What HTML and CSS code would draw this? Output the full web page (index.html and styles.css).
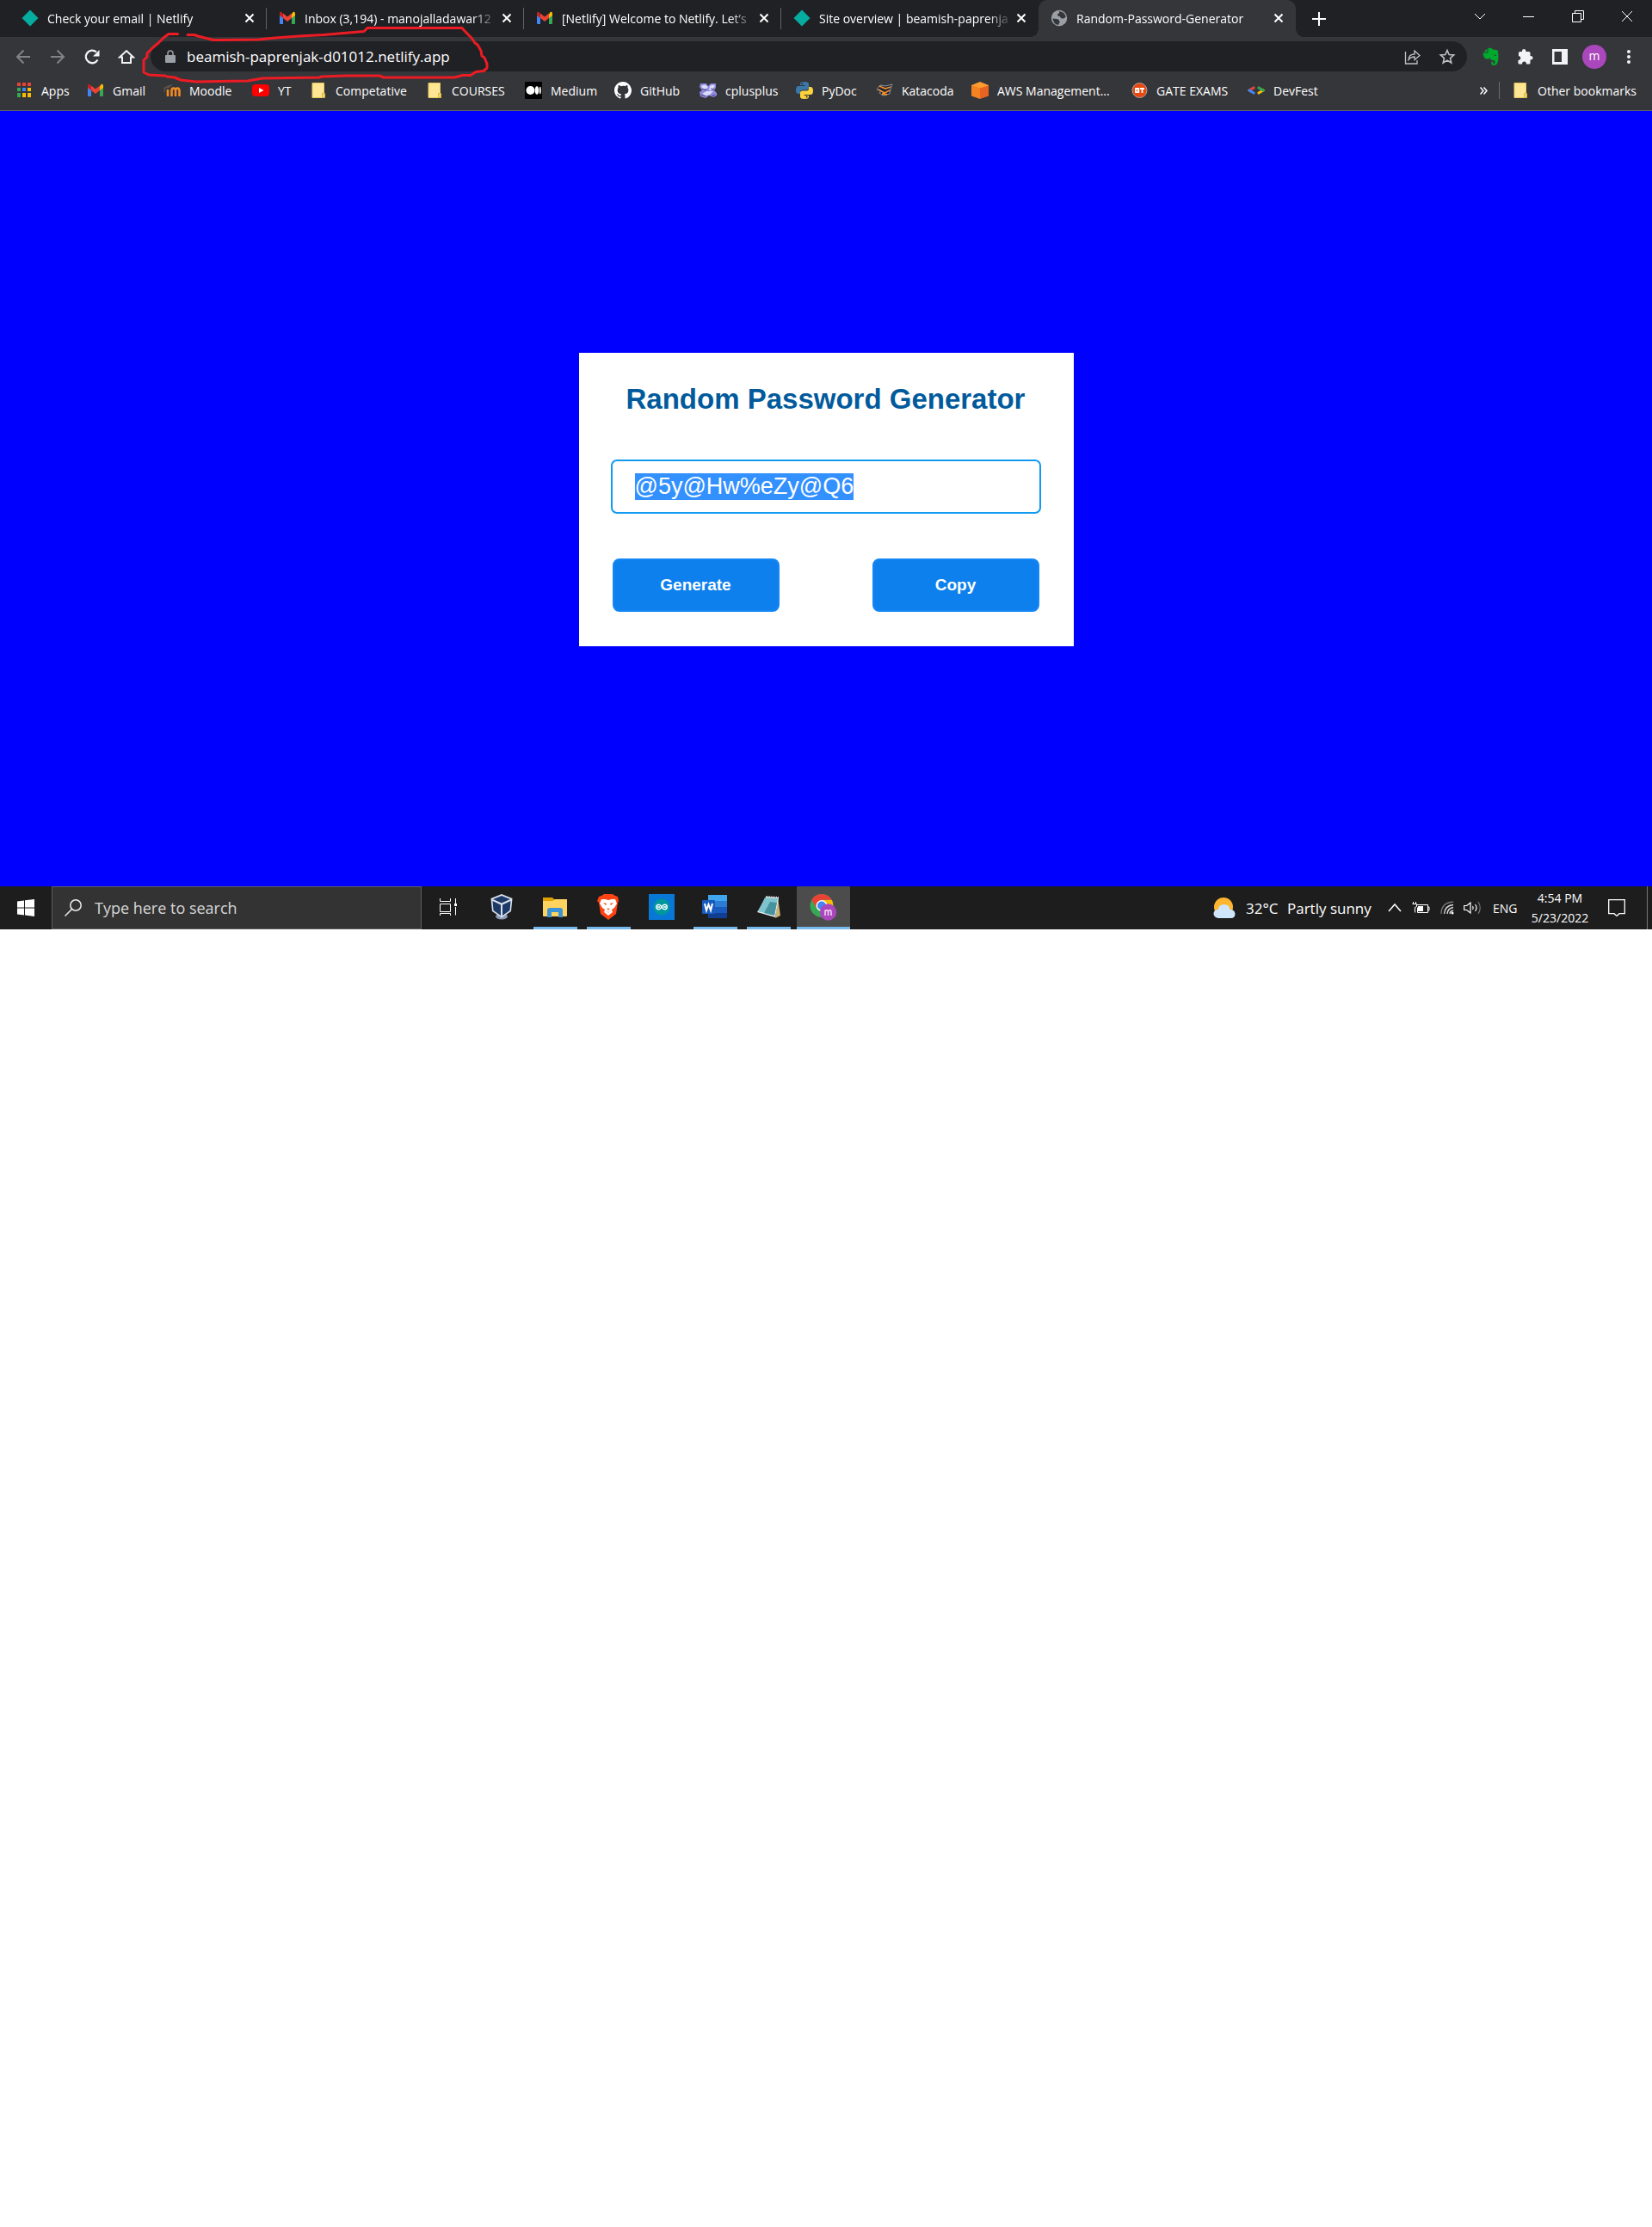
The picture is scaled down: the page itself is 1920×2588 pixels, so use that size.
FILE: index.html
```html
<!DOCTYPE html>
<html lang="en">
<head>
<meta charset="utf-8">
<title>Random-Password-Generator</title>
<link rel="stylesheet" href="styles.css">
</head>
<body>
<svg width="0" height="0" class="defs" aria-hidden="true">
  <symbol id="netlify" viewBox="0 0 20 20"><path fill="#05ada0" d="M10 .5 19.500 10 10 19.500 .5 10z"/></symbol>
  <symbol id="gmail" viewBox="0 0 20 20"><path fill="#4285f4" d="M1 5v11q0 1 1 1h3V8z"/><path fill="#34a853" d="M19 5v11q0 1-1 1h-3V8z"/><path fill="#fbbc04" d="M15 5.500V10l4-3V5q0-3-2.500-2z"/><path fill="#c5221f" d="M5 5.500V10L1 7V5q0-3 2.500-2z"/><path fill="#ea4335" d="m5 4.500 5 4 5-4V10l-5 4-5-4z"/></symbol>
  <symbol id="folder" viewBox="0 0 20 20"><path fill="#ffe694" stroke="#e8c85c" d="M3 1.500h13.500v17H3z"/><path fill="#f5d565" stroke="#d9b845" d="M14.500 13.500h3v5h-3z"/></symbol>
  <symbol id="x" viewBox="0 0 12 12"><path fill="none" stroke="#fff" stroke-width="2" d="m1.500 1.500 9 9m0-9-9 9"/></symbol>
</svg>

<header class="browser">
  <nav class="tabs" aria-label="Tabs">
    <div class="tab"><svg class="fav"><use href="#netlify"/></svg><span class="tab-title">Check your email | Netlify</span><button class="tab-close" aria-label="Close tab"><svg width="12" height="12"><use href="#x"/></svg></button></div>
    <div class="tab"><svg class="fav"><use href="#gmail"/></svg><span class="tab-title">Inbox (3,194) - manojalladawar12</span><button class="tab-close" aria-label="Close tab"><svg width="12" height="12"><use href="#x"/></svg></button></div>
    <div class="tab"><svg class="fav"><use href="#gmail"/></svg><span class="tab-title">[Netlify] Welcome to Netlify. Let’s</span><button class="tab-close" aria-label="Close tab"><svg width="12" height="12"><use href="#x"/></svg></button></div>
    <div class="tab last"><svg class="fav"><use href="#netlify"/></svg><span class="tab-title">Site overview | beamish-paprenja</span><button class="tab-close" aria-label="Close tab"><svg width="12" height="12"><use href="#x"/></svg></button></div>
    <div class="tab active"><svg class="fav" viewBox="0 0 20 20"><circle cx="10" cy="10" r="9.200" fill="#9aa0a6"/><path fill="#35363a" d="M2.500 10.500 7 11q3 0 3 2.500 1.500.5 0 2.500l-1 2Q3 17 2.500 10.500zM10 2.200q6 0 7.700 6.300-1.500 2.500-3.700 2-3-.5-3-2.500-3 0-3-2 0-1.500 2-1.500z"/></svg><span class="tab-title">Random-Password-Generator</span><button class="tab-close" aria-label="Close tab"><svg width="12" height="12"><use href="#x"/></svg></button></div>
    <button class="new-tab" aria-label="New tab"><svg width="16" height="16"><path stroke="#fff" stroke-width="2" d="M8 0v16M0 8h16"/></svg></button>
    <div class="window-controls">
      <button aria-label="Search tabs"><svg width="14" height="14"><path d="m1 4 6 6 6-6"/></svg></button>
      <button aria-label="Minimize"><svg width="14" height="14"><path d="M0 7.500h13"/></svg></button>
      <button aria-label="Restore"><svg width="14" height="14"><path d="M.5 3.500h10v10H.5zM3.500 3V.5h10v10H11"/></svg></button>
      <button aria-label="Close"><svg width="14" height="14"><path d="m1 1 12 12M13 1 1 13"/></svg></button>
    </div>
  </nav>

  <div class="toolbar">
    <button class="tool" aria-label="Back"><svg width="20" height="20" fill="none" stroke="#828387" stroke-width="2"><path d="M18 10H3m7.500-7.500L3 10l7.500 7.500"/></svg></button>
    <button class="tool" aria-label="Forward"><svg width="20" height="20" fill="none" stroke="#828387" stroke-width="2"><path d="M2 10h15M9.500 2.500 17 10l-7.500 7.500"/></svg></button>
    <button class="tool" aria-label="Reload"><svg width="20" height="20"><path fill="none" stroke="#f1f3f4" stroke-width="2.300" d="M16.500 13.500A7.300 7.300 0 1 1 15 4.500"/><path fill="#f1f3f4" d="M18.500 2v7.500H11z"/></svg></button>
    <button class="tool" aria-label="Home"><svg width="20" height="20"><path fill="none" stroke="#f1f3f4" stroke-width="2" d="M2 10.500h3V17h10v-6.500h3L10 3z"/></svg></button>
    <div class="omnibox">
      <svg width="12" height="16"><path fill="#9aa0a6" d="M1 6h10q1 0 1 1v7q0 1-1 1H1q-1 0-1-1V7q0-1 1-1z"/><path fill="none" stroke="#9aa0a6" stroke-width="1.500" d="M3 7V4q0-3 3-3t3 3v3"/></svg>
      <input type="text" class="address" aria-label="Address" value="beamish-paprenjak-d01012.netlify.app">
      <button class="tool" aria-label="Share"><svg width="20" height="20" fill="none" stroke="#bdc1c6" stroke-width="1.300"><path d="M1.500 4v14H15v-4M5 13.500q0-6.500 7-6.500V3l6 5.500-6 5V10q-4.500 0-7 3.500z"/></svg></button>
      <button class="tool" aria-label="Bookmark"><svg width="20" height="20"><path fill="none" stroke="#bdc1c6" stroke-width="1.600" d="m10 2.500 2.200 5 5.500.5-4.200 3.600 1.300 5.400-4.800-2.900L5.200 17l1.300-5.400L2.300 8l5.500-.5z"/></svg></button>
    </div>
    <button class="tool" aria-label="Evernote"><svg width="20" height="22"><path fill="#00a82d" d="M6.500 1v4.500q0 1-1 1H1Q.3 7 1.300 10.500q.7 2.500 3.500 3h2.700l.7-2q.7 3.300 3 3.300 2.800 0 3.300 1.500.5 2.700-1.500 2.500-1.500-.3-1-1.800 1-.5 1.200-.5-2.700-1-3 1.500-.3 3 3.200 3 5 0 5-9 0-8-1-8.500-.5-.8-5.400-1-1-2-4-1.700zM5.500 1.500 1.500 5.500h4zM14 8.500q1.800-.5 2 1.500-1-.5-2.200-.2z"/></svg></button>
    <button class="tool" aria-label="Extensions"><svg width="20" height="20"><path fill="#f1f3f4" d="M2 5.500q0-1.500 1.500-1.500H6q-.3-3 2.200-3t2.300 3H14q1.500 0 1.500 1.500V9q3 0 3 2.200t-3 2.300v3.500q0 1.500-1.500 1.500h-3q0-3-2.500-3T6 18.500H3Q1.500 18.500 1.500 17v-3q2.800 0 2.800-2.400T2 9z"/></svg></button>
    <button class="tool" aria-label="Side panel"><svg width="18" height="18"><path fill="#f1f3f4" fill-rule="evenodd" d="M0 0h18v18H0zM2.500 3v12h8.500V3z"/></svg></button>
    <button class="tool" aria-label="Profile"><span class="avatar">m</span></button>
    <button class="tool" aria-label="Menu"><svg width="6" height="18" fill="#f1f3f4"><circle cx="3" cy="3" r="2"/><circle cx="3" cy="9" r="2"/><circle cx="3" cy="15" r="2"/></svg></button>
  </div>

  <nav class="bookmarks" aria-label="Bookmarks">
    <a href="#"><svg viewBox="0 0 20 20"><path fill="#ea4335" d="M2 1h4v4H2zm6 0h4v4H8zm6 0h4v4h-4z"/><path fill="#34a853" d="M2 7h4v4H2zm0 6h4v5H2z"/><path fill="#4285f4" d="M8 7h4v4H8z"/><path fill="#fbbc04" d="M14 7h4v4h-4zm-6 6h4v5H8zm6 0h4v5h-4z"/></svg>Apps</a>
    <a href="#"><svg><use href="#gmail"/></svg>Gmail</a>
    <a href="#"><svg viewBox="0 0 20 20"><path fill="none" stroke="#f08a24" stroke-width="2.600" d="M5 17V9m4.500 8v-6.500q0-3 2.200-3t2.300 3V17m0-6.500q0-3 2.200-3t2.300 3V17"/><path fill="#5b5148" d="m0 7 6-3 5-1-4 4-5 1v4H1z"/></svg>Moodle</a>
    <a href="#"><svg viewBox="0 0 20 20"><rect y="3" width="20" height="14" rx="4" fill="#f00"/><path fill="#fff" d="m8 7 5.500 3L8 13z"/></svg>YT</a>
    <a href="#"><svg><use href="#folder"/></svg>Competative</a>
    <a href="#"><svg><use href="#folder"/></svg>COURSES</a>
    <a href="#"><svg viewBox="0 0 20 20"><rect width="20" height="20" rx="1"/><g fill="#fff"><circle cx="6.500" cy="10" r="5"/><ellipse cx="14" cy="10" rx="2.200" ry="4.800"/><ellipse cx="17.800" cy="10" rx="1" ry="4.300"/></g></svg>Medium</a>
    <a href="#"><svg viewBox="0 0 16 16"><path fill="#fff" d="M8 0C3.580 0 0 3.580 0 8c0 3.540 2.290 6.530 5.470 7.590.4.070.55-.17.55-.38 0-.19-.01-.82-.01-1.490-2.010.37-2.530-.49-2.690-.94-.09-.23-.48-.94-.82-1.130-.28-.15-.68-.52-.01-.53.63-.01 1.080.58 1.230.82.72 1.210 1.870.87 2.330.66.07-.52.28-.87.51-1.070-1.780-.2-3.640-.89-3.640-3.950 0-.87.31-1.590.82-2.150-.08-.2-.36-1.020.08-2.120 0 0 .67-.21 2.200.82A7.700 7.700 0 0 1 8 3.860c.68 0 1.360.09 2 .27 1.530-1.040 2.200-.82 2.200-.82.44 1.100.16 1.920.08 2.120.51.56.82 1.270.82 2.150 0 3.070-1.870 3.750-3.650 3.950.29.25.54.73.54 1.480 0 1.070-.01 1.930-.01 2.200 0 .21.15.46.55.38A8 8 0 0 0 8 0z"/></svg>GitHub</a>
    <a href="#"><svg viewBox="0 0 20 20"><path fill="#8f8ae0" d="M1 2h7l2 3 3-3h6v5l-2 3 3 3v3l-4 2-5-2-4 3-6-2-1-5 3-2-3-4z"/><path fill="#dcdcf8" d="M2 5q5-4 8 2l-3 1-3 1zM12 5q4-3 6 0l-4 5h-3zM3 14l5-3 8 0-4 4-5 1z"/><path stroke="#484275" d="m3 8 5 2m5-2 4 1M2 15l5 2m7 0 4-2"/></svg>cplusplus</a>
    <a href="#"><svg viewBox="0 0 20 20"><path fill="#3b77a8" d="M10 0q5 0 5 2.500V7q0 2.500-2.500 2.500h-5Q5 9.500 5 12v2H3q-3 0-3-4.500Q0 5 3 5h7.500V4H5V2.500Q5 0 10 0z"/><path fill="#ffd43b" d="M10 20q-5 0-5-2.500V13q0-2.500 2.500-2.500h5Q15 10.500 15 8V6h2q3 0 3 4.500 0 4.500-3 4.500H9.500v1H15v1.500Q15 20 10 20z"/><circle cx="7.300" cy="2.400" r="1" fill="#35363a"/><circle cx="12.700" cy="17.600" r="1" fill="#35363a"/></svg>PyDoc</a>
    <a href="#"><svg viewBox="0 0 20 20"><path fill="#1d2530" stroke="#8796a5" d="m1 9 4-5 6 1 8-2-2 5-1 6-8 2-4-3 3-2z"/><path stroke="#f28c28" stroke-width="1.800" fill="none" d="m4 5 7 3 6-2M3 9l7 4 6-3M7 14l6 1"/></svg>Katacoda</a>
    <a href="#"><svg viewBox="0 0 20 20"><path fill="#ff9a2e" d="m10 0 10 4v1L10 8 0 5V4z"/><path fill="#f58220" d="m0 4.500 10 3V20L0 16.500z"/><path fill="#e96420" d="m20 4.500-10 3V20l10-3.500z"/></svg>AWS Management...</a>
    <a href="#"><svg viewBox="0 0 20 20"><circle cx="10.500" cy="10" r="8.500" fill="#e8470f" stroke="#a9a29f"/><path fill="none" stroke="#fff" stroke-width="1.800" d="M10 8H6v4.200h3.300V10H8M10.800 8H16m-2.500 0v5"/></svg>GATE EXAMS</a>
    <a href="#"><svg viewBox="0 0 20 20" stroke-width="3.200" stroke-linecap="round"><path stroke="#ea4335" d="m2 10 5-3"/><path stroke="#4285f4" d="m2 10 5 3"/><path stroke="#fbbc04" d="m13 13 5-3"/><path stroke="#34a853" d="m13 7 5 3"/></svg>DevFest</a>
    <div class="more"><button aria-label="More bookmarks"><svg width="9" height="9"><path fill="none" stroke="#fff" stroke-width="1.500" d="M.5.5 4 4.500l-3.500 4m4-8L8 4.500l-3.500 4"/></svg></button></div>
    <a href="#" class="other"><svg><use href="#folder"/></svg>Other bookmarks</a>
  </nav>
  <svg class="scribble" width="410" height="72" viewBox="160 26 410 72" fill="none" stroke="#ed1c24" stroke-width="3" stroke-linecap="round" stroke-linejoin="round" aria-hidden="true"><path d="M206.500 39.500H196l-6 4.500-6 6-6 5-7 7v4l-4 4v14l6 3 19 1 2 1 9 1 7 3 18 2 60-1 17-3 66-1 3-1 28-1h39l5 2h82l10-2.500h9l6-4 9-1 4-3.500V74l-3-7-3-2-1-6-4-7-3-2-4-6-8-8-3-3.500H427l-4 4-47 4-29 1.500-27 2-20 2-52 .5-18-4.500-4-1.500h-8"/></svg>
</header>

<main class="stage">
  <section class="card">
    <h1>Random Password Generator</h1>
    <input type="text" id="password" class="password" aria-label="Password" value="@5y@Hw%eZy@Q6" readonly>
    <div class="actions">
      <button class="action">Generate</button>
      <button class="action">Copy</button>
    </div>
  </section>
</main>

<footer class="taskbar">
  <button class="start" aria-label="Start"><svg width="20" height="20" fill="#fff"><path d="m0 2.500 8-1V9.500H0zM9 1.300 20 0v9.500H9zM0 10.500h8v8l-8-1zM9 10.500h11V20L9 18.600z"/></svg></button>
  <label class="search"><svg width="20" height="20" fill="none" stroke="#eee" stroke-width="1.500"><circle cx="13" cy="7" r="6.200"/><path d="m8.500 11.500-8 8"/></svg><input type="text" placeholder="Type here to search" aria-label="Search"></label>
  <div class="apps">
    <button class="app" aria-label="Task view"><svg width="20" height="20" fill="none" stroke="#fff"><path d="M.5 0v3.500h12V0M.5 6.500h12v9H.5zM.5 20v-2.500h12V20M18.500 0v6m0 4v9.500"/><path fill="#fff" stroke="none" d="M17 6h3v3h-3z"/></svg></button>
    <button class="app" aria-label="VirtualBox"><svg width="26" height="30" viewBox="2 0 26 30"><ellipse cx="15" cy="26" rx="7" ry="3.500" fill="#8c9bb8"/><path fill="#d7dfeb" d="m15 0 12.500 5-1.500 15-11 7.500L4 20 2.500 5z"/><path fill="#1d3a66" d="m15 2 10 4-10 4.500L5 6zM4.500 8 14 12.500V25L5.500 19zM25.500 8 16 12.500V25l8.500-6z"/></svg></button>
    <button class="app running" aria-label="File Explorer"><svg width="28" height="24"><path fill="#e0a000" d="M0 1h11l3 3v6H0z"/><path fill="#ffd45e" d="M0 5h11l3-2h14v19q0 1-1 1H1q-1 0-1-1z"/><path fill="#3e93d6" d="M5 24V16q0-3 3-3h12q3 0 3 3v8h-5v-6h-8v6z"/></svg></button>
    <button class="app running" aria-label="Brave"><svg width="26" height="30"><path fill="#ff4312" d="M8 0h10l3 2 3 1 1 5-1 2-2 13-9 7-9-7L2 10 0 8l2-5 3-1z"/><path fill="#fff" d="M5 6h4l4 1 4-1h4l2 5-3 5-3 2 1 3-5 4-5-4 1-3-3-2-3-5z"/><path fill="#ff4312" d="m7 10 4 1-1 2zM19 10l-4 1 1 2zM11 16l2 1 2-1-2 3zM10 20l3 1 3-1-3 1.500z"/></svg></button>
    <button class="app" aria-label="Arduino"><svg width="30" height="30"><path fill="#0878d7" d="M0 0h30v30H0z"/><circle cx="15" cy="15" r="9.500" fill="#00979d"/><path fill="none" stroke="#fff" stroke-width="1.500" d="M15 15q-1.500-2.700-3.500-2.700a2.700 2.700 0 0 0 0 5.400q2 0 3.500-2.700t3.500-2.700a2.700 2.700 0 0 1 0 5.400q-2 0-3.500-2.700zM10 15h3m4 0h3"/></svg></button>
    <button class="app running" aria-label="Word"><svg width="30" height="28"><path fill="#41a5ee" d="M7 0h22v7H7z"/><path fill="#2b7cd3" d="M7 7h22v7H7z"/><path fill="#185abd" d="M7 14h22v7H7z"/><path fill="#103f91" d="M7 21h22v6H7z"/><rect y="6" width="15" height="16" rx="1" fill="#185abd"/><path fill="none" stroke="#fff" stroke-width="2" d="m3 10 2 8 2.500-7 2.500 7 2-8"/></svg></button>
    <button class="app running" aria-label="Notepad"><svg width="28" height="28"><path fill="#c9b375" d="m25 3 3 21-6 3z"/><path fill="#e9eeee" d="m12 2 14 1-4 23-21-6z"/><path fill="#7fc3cf" d="m10 3 15 1-4 20L2 19z"/><path fill="#2d7f8c" d="M16 8 9 21l12 3 3-15z" opacity=".7"/><path stroke="#ddd" stroke-width="2" stroke-dasharray="1 1" d="m11 2 15 1"/></svg></button>
    <button class="app current" aria-label="Chrome"><svg width="32" height="32"><circle cx="14" cy="14.500" r="13.500" fill="#34a853"/><path fill="#fbbc04" d="M14 7.800h11.700Q28 12 27 18L14 28l6-10z"/><path fill="#ea4335" d="M2.300 7.800a13.500 13.500 0 0 1 23.400 0H14L8.300 18z"/><circle cx="14" cy="14.500" r="6.500" fill="#fff"/><circle cx="14" cy="14.500" r="5" fill="#4285f4"/><circle cx="21.500" cy="22" r="9.700" fill="#ab47bc"/><path fill="none" stroke="#f3d9f7" stroke-width="1.500" d="M18 26v-6.500m0 1.500q3.500-3 3.500 1v4m0-5q3.500-3 3.500 1v4"/></svg></button>
  </div>
  <div class="tray">
    <svg class="weather" width="26" height="26"><circle cx="12" cy="12" r="11" fill="#ffb52e"/><path fill="#cfe6fa" d="M6 25q-6-1-5.500-6 1-4 5-4 1-6 7-6 6.500 0 7 6 5.500 0 6 5 0 5-5 5z"/></svg>
    <span class="temp">32°C</span><span class="sky">Partly sunny</span>
    <svg class="chev" width="16" height="12"><path fill="none" stroke="#fff" stroke-width="1.500" d="m1 10 7-8 7 8"/></svg>
    <svg class="battery" width="21" height="14" fill="none" stroke="#fff"><path d="M5.500 3.500h13v9h-12v-6M18.500 6h1.500v4h-1.500M.5 2.500h5v3l-2 1v6M1.500 0v2M4.500 0v2"/><path fill="#fff" stroke="none" d="M7 5h6v6H7z"/></svg>
    <svg class="wifi" width="16" height="16" fill="none" stroke="#ddd" stroke-width="1.300"><path stroke="#777" d="M1 15Q1 2 15 1"/><path d="M4.500 15Q5 5.500 15 4.500M8 15q.5-6.500 7-7.500M11 15q0-3 4-4"/><circle cx="14" cy="14" r="1.500" fill="#fff" stroke="none"/></svg>
    <svg class="speaker" width="21" height="16" fill="none" stroke="#fff" stroke-width="1.200"><path d="M.7 5.500h3L8 2v12l-4.300-3.500h-3zM10.500 6q1.500 2 0 4M13.500 4q3 4 0 8"/><path stroke="#777" d="M17 1q4.500 7 0 14"/></svg>
    <span class="lang">ENG</span>
    <time class="clock">4:54 PM<br>5/23/2022</time>
    <button class="notes" aria-label="Notifications"><svg width="20" height="20"><path fill="none" stroke="#fff" stroke-width="1.300" d="M.7.700h18.600v16H13l-3 2.800-3-2.800H.7z"/></svg></button>
  </div>
</footer>
<script src="script.js"></script>
</body>
</html>
```
FILE: styles.css
```css
* { box-sizing: border-box; }
body { margin: 0; background: #fff; font-family: "Open Sans", "Noto Sans", sans-serif; font-size: 14px; color: #fff; }
button { margin: 0; padding: 0; border: 0; background: none; color: inherit; font: inherit; }
input { font: inherit; color: inherit; outline: 0; }
a { color: inherit; text-decoration: none; }
svg { display: block; flex: none; }
.defs { position: absolute; }

/* Browser chrome */
.browser { position: relative; background: #35363a; border-bottom: 1px solid #5f6064; }
.tabs { display: flex; height: 43px; padding-left: 11px; background: #202124; }
.tab { position: relative; display: flex; align-items: center; width: 299px; padding-left: 14px; padding-bottom: 1px; }
.tab:not(.last):not(.active)::after { content: ""; position: absolute; right: 0; top: 9px; width: 1px; height: 25px; background: #5f6368; }
.fav { width: 20px; height: 20px; margin-right: 10px; }
.tab-title { width: 222px; overflow: hidden; white-space: nowrap; mask-image: linear-gradient(to right, #000 195px, transparent 225px); }
.tab-close { margin-left: 7px; }
.tab.active { background: #35363a; border-radius: 10px 10px 0 0; }
.tab.active::before, .tab.active::after { content: ""; position: absolute; bottom: 0; width: 10px; height: 10px; }
.tab.active::before { left: -10px; background: radial-gradient(circle at 0 0, #202124 10px, #35363a 10px); }
.tab.active::after { right: -10px; background: radial-gradient(circle at 100% 0, #202124 10px, #35363a 10px); }
.new-tab { display: grid; place-items: center; width: 54px; }
.window-controls { display: flex; margin-left: auto; padding-right: 1px; }
.window-controls button { display: grid; place-items: center; width: 57px; height: 37px; }
.window-controls path { fill: none; stroke: #fff; }

.toolbar { display: flex; align-items: center; height: 45px; padding: 0 7px; }
.tool { display: grid; place-items: center; width: 40px; height: 35px; }
.omnibox { display: flex; align-items: center; flex: 1; height: 35px; margin: 0 8px; padding: 0 3px 0 17px; border-radius: 18px; background: #202124; }
.address { flex: 1; height: 33px; margin-left: 13px; padding: 0; border: 0; background: none; font-size: 17px; }
.avatar { width: 28px; height: 28px; border-radius: 14px; background: #ab47bc; line-height: 26px; text-align: center; }

.bookmarks { display: grid; align-items: center; height: 40px; padding: 0 18px 6px; white-space: nowrap;
  grid-template-columns: 83px 89px 103px 67px 135px 115px 104px 99px 112px 93px 111px 185px 136px 90px 1fr auto; }
.bookmarks a { display: flex; align-items: center; }
.bookmarks a svg { width: 20px; height: 20px; margin-right: 10px; }
.more { display: flex; justify-content: flex-end; padding-right: 13px; }
.bookmarks .other { padding-left: 14px; border-left: 1px solid #6b6c70; }
.scribble { position: absolute; left: 160px; top: 26px; pointer-events: none; }

/* Generator page */
.stage { display: grid; place-items: center; min-height: 901px; padding-top: 2px; background: #00f; }
.card { display: flex; flex-direction: column; width: 575px; padding: 35px 38px 40px 37px; background: #fff; font-family: "Liberation Sans", Arial, sans-serif; }
h1 { margin: 0 0 51px; font-size: 33px; line-height: 38px; text-align: center; color: #015a9c; }
.password { height: 63px; padding: 0 26px; border: 2px solid #119af0; border-radius: 7px; background: #fff; font-size: 27px; color: #111; }
.password::selection { background: #3390ff; color: #fff; }
.actions { display: flex; justify-content: space-between; margin: 52px 2px 0; }
.action { width: 194px; height: 62px; border: 2px solid #1586f5; border-radius: 8px; background: #0d80ee; font-size: 19px; font-weight: 700; }

/* Taskbar */
.taskbar { display: flex; height: 50px; background: #1d1d1d; }
.start { display: grid; place-items: center; width: 60px; }
.search { display: flex; align-items: center; width: 430px; padding-left: 14px; border: 1px solid #5e5e5e; background: #333; }
.search input { flex: 1; margin-left: 15px; padding: 0; border: 0; background: none; font-size: 18px; }
.search input::placeholder { color: #d6d6d6; opacity: 1; }
.apps { display: flex; }
.app { display: grid; place-items: center; width: 62px; border-bottom: 3px solid transparent; }
.running { background: linear-gradient(#76b9ed, #76b9ed) center bottom / 51px 3px no-repeat border-box; }
.current { margin-left: 2px; background: #4c4c4c; border-bottom-color: #76b9ed; }
.tray { display: flex; align-items: center; margin-left: auto; padding-right: 5px; white-space: nowrap; }
.temp, .sky { font-size: 17px; }
.temp { width: 48px; margin-left: 12px; }
.sky { width: 106px; }
.chev { margin-left: 11px; }
.battery { margin-left: 12px; }
.wifi { margin-left: 12px; }
.speaker { margin-left: 11px; }
.lang { width: 32px; margin-left: 13px; }
.clock { width: 80px; margin-left: 6px; text-align: center; line-height: 23px; }
.notes { display: grid; place-items: center; width: 62px; height: 50px; padding-right: 10px; border-right: 1px solid #777; }
```
FILE: script.js
```js
const field = document.getElementById("password");
field.focus();
field.select();
```
